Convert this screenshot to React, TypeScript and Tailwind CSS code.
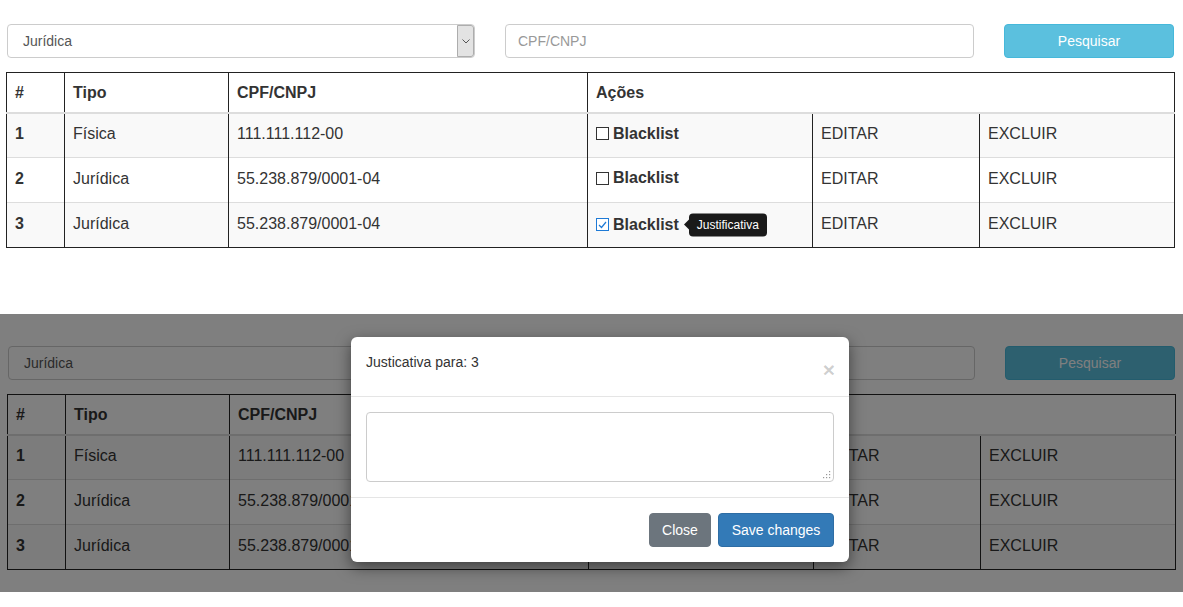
import React from 'react';

type Row = { id: number; tipo: string; doc: string; checked: boolean };

const rows: Row[] = [
    { id: 1, tipo: 'Física', doc: '111.111.112-00', checked: false },
    { id: 2, tipo: 'Jurídica', doc: '55.238.879/0001-04', checked: false },
    { id: 3, tipo: 'Jurídica', doc: '55.238.879/0001-04', checked: true },
];

const Checkbox: React.FC<{ checked: boolean }> = ({ checked }) => (
    <span
        className={`inline-flex items-center justify-center w-[13px] h-[13px] bg-white border ${checked ? 'border-[#1e7ad6]' : 'border-[#333]'}`}
    >
        {checked && (
            <svg width="9" height="8" viewBox="0 0 9 8">
                <path d="M1 4 L3.5 6.5 L8 1" fill="none" stroke="#1e7ad6" strokeWidth="1.2" />
            </svg>
        )}
    </span>
);

// vertical lines are dark, lines between rows are light
const head = 'border-x border-x-[#222] border-t border-t-[#222] border-b-2 border-b-[#ddd] px-2 align-middle text-left font-bold';
const body = 'border-x border-x-[#222] border-t border-t-[#ddd] px-2 pt-0 pb-[2px] align-middle text-left';
const lastBody = 'border-x border-x-[#222] border-t border-t-[#ddd] border-b border-b-[#222] px-2 pt-0 pb-[2px] align-middle text-left';

const Page: React.FC<{ shifted?: boolean }> = ({ shifted }) => (
    <div className={shifted ? 'pt-[32px] pl-[1px]' : 'pt-[24px]'}>
        <div className="flex items-center pl-[7px]">
            <div className="flex items-stretch w-[468px] h-[34px] border border-[#ccc] rounded-[4px] bg-white">
                <span className="flex-1 flex items-center pl-[15px] text-[14px] text-[#555]">Jurídica</span>
                <span className="flex items-center justify-center w-[17px] bg-[#e3e3e3] border border-[#adadad] rounded-r-[3px]">
                    <svg width="8" height="5" viewBox="0 0 8 5">
                        <path d="M0.5 0.5 L4 4 L7.5 0.5" fill="none" stroke="#555" strokeWidth="1" />
                    </svg>
                </span>
            </div>
            <div className="ml-[30px] w-[469px] h-[34px] border border-[#ccc] rounded-[4px] bg-white flex items-center pl-3 text-[14px] text-[#999]">
                CPF/CNPJ
            </div>
            <button className="ml-[30px] w-[170px] h-[34px] rounded-[4px] bg-[#5bc0de] border border-[#46b8da] text-white text-[14px]">
                Pesquisar
            </button>
        </div>

        <table className="ml-[6px] mt-[14px] w-[1168px] table-fixed border-collapse border border-[#222] text-[16px] text-[#333]">
            <colgroup>
                <col className="w-[58px]" />
                <col className="w-[164px]" />
                <col className="w-[359px]" />
                <col className="w-[225px]" />
                <col className="w-[167px]" />
                <col className="w-[195px]" />
            </colgroup>
            <thead>
                <tr className="h-[40px]">
                    <th className={`${head} pt-[1px]`}>#</th>
                    <th className={`${head} pt-[1px]`}>Tipo</th>
                    <th className={`${head} pt-[1px]`}>CPF/CNPJ</th>
                    <th colSpan={3} className={`${head} pt-[1px]`}>Ações</th>
                </tr>
            </thead>
            <tbody>
                {rows.map((r, i) => {
                    const c = i === rows.length - 1 ? lastBody : body;
                    return (
                        <tr key={r.id} className={`h-[45px] ${i % 2 === 0 ? 'bg-[#f9f9f9]' : 'bg-white'}`}>
                            <td className={`${c} font-bold`}>{r.id}</td>
                            <td className={c}>{r.tipo}</td>
                            <td className={c}>{r.doc}</td>
                            <td className={c}>
                                <span className="relative inline-flex items-center gap-[4px]">
                                    <Checkbox checked={r.checked} />
                                    <b>Blacklist</b>
                                    {r.checked && (
                                        <span className="absolute left-full top-1/2 -translate-y-1/2 ml-[10px] flex items-center">
                                            <span className="absolute -left-[5px] w-0 h-0 border-y-[5px] border-y-transparent border-r-[5px] border-r-[#1a1a1a]" />
                                            <span className="whitespace-nowrap bg-[#1a1a1a] text-white text-[12px] leading-[17px] px-[8px] py-[3px] rounded-[4px]">
                                                Justificativa
                                            </span>
                                        </span>
                                    )}
                                </span>
                            </td>
                            <td className={c}>EDITAR</td>
                            <td className={c}>EXCLUIR</td>
                        </tr>
                    );
                })}
            </tbody>
        </table>
    </div>
);

const App: React.FC = () => {
    return (
        <div className="w-[1183px] h-[607px] bg-white overflow-hidden font-['Liberation_Sans',Arial,sans-serif]">
            <div className="h-[314px] overflow-hidden">
                <Page />
            </div>

            <div className="relative h-[278px] overflow-hidden">
                <Page shifted />
                <div className="absolute inset-0 bg-black/50" />

                <div className="absolute left-[351px] top-[23px] w-[498px] bg-white rounded-[6px] shadow-[0_5px_15px_rgba(0,0,0,0.5)]">
                    <div className="flex items-start justify-between h-[60px] pl-[15px] pr-[14px] pt-[15px] border-b border-[#e5e5e5]">
                        <span className="text-[14px] leading-[20px] text-[#333]">Justicativa para: 3</span>
                        <span className="mt-[7px] text-[21px] leading-[21px] font-bold text-black/20">×</span>
                    </div>
                    <div className="p-[15px]">
                        <div className="relative h-[70px] border border-[#ccc] rounded-[4px] bg-white">
                            <svg className="absolute right-[2px] bottom-[2px]" width="8" height="8" viewBox="0 0 8 8">
                                <rect x="6" y="0" width="1.2" height="1.2" fill="#999" />
                                <rect x="3" y="3" width="1.2" height="1.2" fill="#999" />
                                <rect x="6" y="3" width="1.2" height="1.2" fill="#999" />
                                <rect x="0" y="6" width="1.2" height="1.2" fill="#999" />
                                <rect x="3" y="6" width="1.2" height="1.2" fill="#999" />
                                <rect x="6" y="6" width="1.2" height="1.2" fill="#999" />
                            </svg>
                        </div>
                    </div>
                    <div className="flex justify-end gap-[7px] p-[15px] border-t border-[#e5e5e5]">
                        <button className="h-[34px] w-[62px] rounded-[4px] bg-[#6c757d] border border-[#6c757d] text-white text-[14px]">
                            Close
                        </button>
                        <button className="h-[34px] w-[116px] rounded-[4px] bg-[#337ab7] border border-[#2e6da4] text-white text-[14px]">
                            Save changes
                        </button>
                    </div>
                </div>
            </div>
        </div>
    );
};

export default App;
